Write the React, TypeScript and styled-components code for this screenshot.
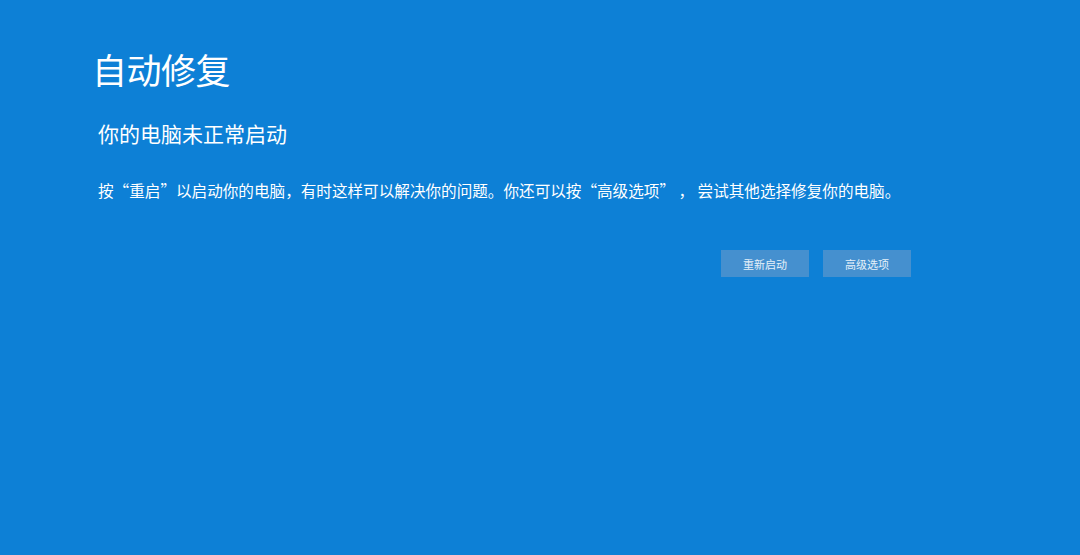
import React from 'react'
import styled, { createGlobalStyle } from 'styled-components'

const GlobalStyle = createGlobalStyle`
  html, body {
    margin: 0;
    padding: 0;
    background: #0d80d6;
  }
  body {
    font-family: "Noto Sans CJK SC", "Microsoft YaHei", sans-serif;
    color: #ffffff;
  }
`

const Screen = styled.div`
  width: 1080px;
  height: 555px;
  background: #0d80d6;
  box-sizing: border-box;
  padding: 44px 0 0 92px;
  overflow: hidden;
`

const Title = styled.h1`
  margin: 0;
  font-size: 35px;
  font-weight: 400;
  line-height: 50px;
  letter-spacing: -0.5px;
`

const Subtitle = styled.h2`
  margin: 24px 0 0 6px;
  font-size: 21px;
  font-weight: 400;
  line-height: 30px;
`

const Message = styled.p`
  margin: 30px 0 0 6px;
  font-size: 15.6px;
  line-height: 24px;
  white-space: pre;
`

const Actions = styled.div`
  display: flex;
  gap: 14px;
  margin: 48px 0 0 629px;
`

const ActionButton = styled.button`
  width: 88px;
  height: 27px;
  border: none;
  padding: 0;
  background: #4590cf;
  color: #e6f0f9;
  font-family: inherit;
  font-size: 11px;
  cursor: pointer;
`

const App = () => (
  <>
    <GlobalStyle />
    <Screen>
      <Title>自动修复</Title>
      <Subtitle>你的电脑未正常启动</Subtitle>
      <Message>
        {'按“重启”以启动你的电脑，有时这样可以解决你的问题。你还可以按“高级选项” ， 尝试其他选择修复你的电脑。'}
      </Message>
      <Actions>
        <ActionButton>重新启动</ActionButton>
        <ActionButton>高级选项</ActionButton>
      </Actions>
    </Screen>
  </>
)

export default App
